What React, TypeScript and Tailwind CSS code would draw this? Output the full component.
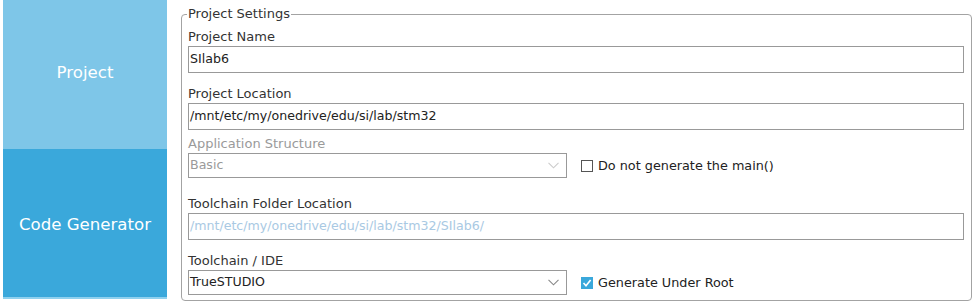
import React from "react";

const font = { fontFamily: '"DejaVu Sans", Verdana, sans-serif' };

function Chevron({ color }: { color: string }) {
  return (
    <svg width="11" height="7" viewBox="0 0 11 7" className="shrink-0">
      <path d="M0.5 0.8 L5.5 5.8 L10.5 0.8" fill="none" stroke={color} strokeWidth="1.1" />
    </svg>
  );
}

function Checkbox({ checked }: { checked: boolean }) {
  if (checked) {
    return (
      <div className="w-[12px] h-[12px] bg-[#3aa8db] flex items-center justify-center shrink-0">
        <svg width="10" height="10" viewBox="0 0 10 10">
          <path d="M1.5 5 L4 7.8 L8.6 2" fill="none" stroke="#ffffff" strokeWidth="1.6" />
        </svg>
      </div>
    );
  }
  return <div className="w-[12px] h-[12px] border border-[#555] bg-white shrink-0" />;
}

export default function App() {
  return (
    <div className="w-[977px] h-[302px] bg-white flex text-[13px]" style={font}>
      <div className="ml-[3px] w-[164px] flex flex-col">
        <div className="h-[149px] bg-[#7ec6e8] flex items-center justify-center text-white text-[16.6px] pb-[3px]">
          Project
        </div>
        <div className="h-[148px] bg-[#3aa8db] flex items-center justify-center text-white text-[16.6px] pt-[4px]">
          Code Generator
        </div>
        <div className="h-[2px] bg-[#8fd1ef]" />
      </div>

      <fieldset className="ml-[14px] mt-[5px] w-[791px] h-[296px] border border-[#a3a3a3] rounded-[4px] pl-[6px] pr-[7px]">
        <legend className="px-[1px] -ml-[1px] text-[#333] leading-[18px]">Project Settings</legend>

        <div className="mt-[5px] h-[17px] leading-[17px] mb-[1px] text-[#333]">Project Name</div>
        <div className="h-[27px] border border-[#999] flex items-center pl-[1px] text-[#222] text-[12.6px]">SIlab6</div>

        <div className="mt-[12px] h-[17px] leading-[17px] mb-[1px] text-[#333]">Project Location</div>
        <div className="h-[27px] border border-[#999] flex items-center pl-[1px] text-[#222] text-[12.6px]">
          /mnt/etc/my/onedrive/edu/si/lab/stm32
        </div>

        <div className="mt-[5px] h-[17px] leading-[17px] mb-[1px] text-[#9a9a9a]">Application Structure</div>
        <div className="flex items-center">
          <div className="w-[379px] h-[25px] border border-[#999] flex items-center justify-between pl-[1px] pr-[7px] text-[#9a9a9a] text-[12.6px]">
            <span>Basic</span>
            <Chevron color="#cccccc" />
          </div>
          <div className="ml-[14px] flex items-center gap-[5px] text-[#222] text-[12.8px]">
            <Checkbox checked={false} />
            <span>Do not generate the main()</span>
          </div>
        </div>

        <div className="mt-[17px] h-[17px] leading-[17px] mb-[1px] text-[#333]">Toolchain Folder Location</div>
        <div className="h-[27px] border border-[#999] flex items-center pl-[1px] text-[#a9c9e3] text-[12.6px]">
          /mnt/etc/my/onedrive/edu/si/lab/stm32/SIlab6/
        </div>

        <div className="mt-[12px] h-[17px] leading-[17px] mb-[1px] text-[#333]">Toolchain / IDE</div>
        <div className="flex items-center">
          <div className="w-[379px] h-[25px] border border-[#999] flex items-center justify-between pl-[1px] pr-[7px] text-[#222] text-[12.6px]">
            <span>TrueSTUDIO</span>
            <Chevron color="#888888" />
          </div>
          <div className="ml-[14px] flex items-center gap-[5px] text-[#222] text-[12.8px]">
            <Checkbox checked={true} />
            <span>Generate Under Root</span>
          </div>
        </div>
      </fieldset>
    </div>
  );
}
